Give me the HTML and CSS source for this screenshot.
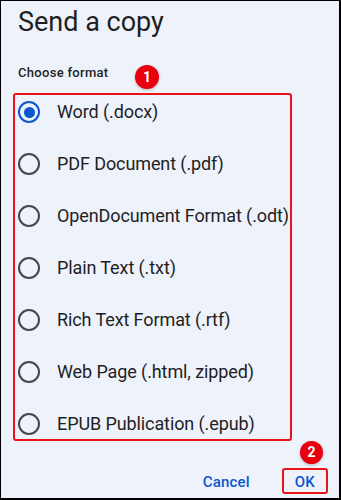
FILE: index.html
```html
<!DOCTYPE html>
<html lang="en">
<head>
<meta charset="utf-8">
<title>Send a copy</title>
<link rel="stylesheet" href="styles.css">
</head>
<body>
<div class="frame">
  <h1 class="title">Send a copy</h1>
  <div class="label">Choose format</div>
  <span class="badge badge-1">1</span>
  <div class="options">
    <div class="option"><span class="radio checked"></span><span class="opt-text">Word (.docx)</span></div>
    <div class="option"><span class="radio"></span><span class="opt-text">PDF Document (.pdf)</span></div>
    <div class="option"><span class="radio"></span><span class="opt-text">OpenDocument Format (.odt)</span></div>
    <div class="option"><span class="radio"></span><span class="opt-text">Plain Text (.txt)</span></div>
    <div class="option"><span class="radio"></span><span class="opt-text">Rich Text Format (.rtf)</span></div>
    <div class="option"><span class="radio"></span><span class="opt-text">Web Page (.html, zipped)</span></div>
    <div class="option"><span class="radio"></span><span class="opt-text">EPUB Publication (.epub)</span></div>
  </div>
  <div class="actions">
    <span class="btn">Cancel</span>
    <span class="btn btn-ok">OK</span>
  </div>
  <span class="badge badge-2">2</span>
</div>
</body>
</html>
```
FILE: styles.css
```css
html, body {
  margin: 0;
  padding: 0;
  background: #000;
}
.frame {
  position: relative;
  width: 341px;
  height: 500px;
  box-sizing: border-box;
  border-style: solid;
  border-color: #000;
  border-width: 1px 2px 2px 1px;
  background: #eef2fb;
  overflow: hidden;
  font-family: Roboto, "Liberation Sans", sans-serif;
  color: #1f1f1f;
}
.title {
  margin: 0;
  padding: 5px 0 0 17px;
  font-size: 27px;
  line-height: 32px;
  font-weight: 400;
}
.label {
  margin-top: 27px;
  padding-left: 17px;
  font-size: 13px;
  line-height: 16px;
  font-weight: 500;
  letter-spacing: 0.3px;
}
.options {
  margin: 12px 0 0 12px;
  width: 279px;
  box-sizing: border-box;
  border: 2px solid #e8131b;
  border-radius: 3px;
  padding-top: 2px;
  display: flex;
  flex-direction: column;
  gap: 22px;
}
.option {
  height: 30px;
  display: flex;
  align-items: center;
  padding-left: 3px;
  gap: 17px;
  white-space: nowrap;
}
.radio {
  width: 22px;
  height: 22px;
  box-sizing: border-box;
  border: 2px solid #444746;
  border-radius: 50%;
  display: flex;
  align-items: center;
  justify-content: center;
  flex: none;
}
.radio.checked {
  border-color: #0b57d0;
}
.radio.checked::after {
  content: "";
  width: 11px;
  height: 11px;
  border-radius: 50%;
  background: #0b57d0;
}
.opt-text {
  font-size: 18px;
  line-height: 22px;
  letter-spacing: -0.1px;
}
.actions {
  margin-top: 27px;
  display: flex;
  justify-content: flex-end;
  align-items: center;
  gap: 30px;
  padding-right: 11px;
}
.btn {
  font-size: 15px;
  line-height: 18px;
  font-weight: 500;
  color: #0b57d0;
  border: 2px solid transparent;
  padding: 3px 0 1px;
  letter-spacing: 0.2px;
}
.btn-ok {
  border-color: #e8131b;
  border-radius: 3px;
  padding: 3px 11px 1px;
}
.badge {
  position: absolute;
  width: 24px;
  height: 24px;
  border-radius: 50%;
  background: #e8000f;
  color: #fff;
  font-size: 14px;
  font-weight: 700;
  line-height: 24px;
  text-align: center;
  box-shadow: 0 1px 3px rgba(0, 0, 0, 0.25);
}
.badge-1 {
  left: 134px;
  top: 64px;
}
.badge-2 {
  left: 299px;
  top: 440px;
  width: 23px;
  height: 23px;
  line-height: 23px;
}
```
